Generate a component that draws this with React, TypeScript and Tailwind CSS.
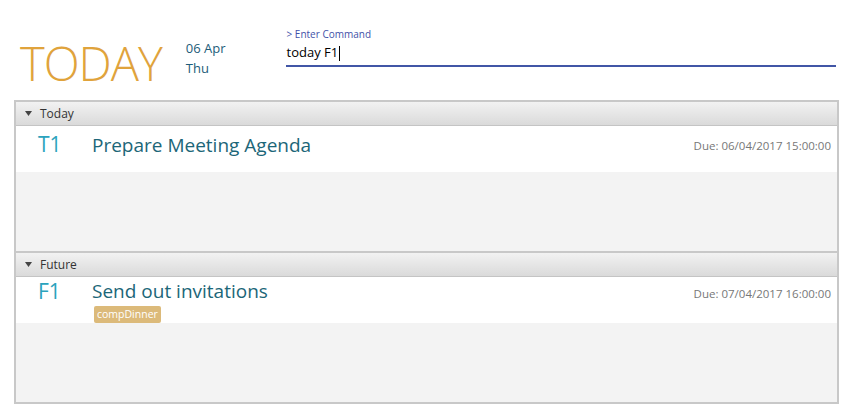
import React from 'react';

type Task = {
  id: string;
  title: string;
  due: string;
  tags?: string[];
};

type Section = {
  name: string;
  tasks: Task[];
};

const sections: Section[] = [
  {
    name: 'Today',
    tasks: [{ id: 'T1', title: 'Prepare Meeting Agenda', due: 'Due: 06/04/2017 15:00:00' }],
  },
  {
    name: 'Future',
    tasks: [
      { id: 'F1', title: 'Send out invitations', due: 'Due: 07/04/2017 16:00:00', tags: ['compDinner'] },
    ],
  },
];

const font = { fontFamily: '"Open Sans", "Noto Sans", sans-serif' };

const TaskRow = ({ task }: { task: Task }) => {
  const tagged = !!task.tags?.length;

  return (
    <div className="flex h-[46px] items-start bg-white">
      <div
        className={`w-[76px] pl-[22px] text-[21px] leading-[28px] text-[#2ba3bd] ${tagged ? 'pt-0' : 'pt-[4px]'}`}
      >
        {task.id}
      </div>
      <div className={`flex flex-1 flex-col ${tagged ? 'pt-[1px]' : 'pt-[6px]'}`}>
        <div className="text-[19px] leading-[26px] text-[#1c6678]">{task.title}</div>
        {tagged && (
          <div className="mt-[2px] flex gap-1 pl-[2px]">
            {task.tags!.map((tag) => (
              <span key={tag} className="rounded-[2px] bg-[#dcba7a] px-[3px] text-[10.5px] leading-[17px] text-white">
                {tag}
              </span>
            ))}
          </div>
        )}
      </div>
      <div
        className={`pr-[6px] text-[11.5px] leading-[15px] text-[#777] ${tagged ? 'pt-[9px]' : 'pt-[12px]'}`}
      >
        {task.due}
      </div>
    </div>
  );
};

const TaskSection = ({ section }: { section: Section }) => (
  <div className="flex h-[149px] flex-col">
    <div className="flex h-[24px] items-center border-b border-[#c4c4c4] bg-gradient-to-b from-[#f2f2f2] to-[#dadada] pl-[9px]">
      <svg width="7" height="5" viewBox="0 0 7 5" className="mr-[8px]">
        <path d="M0 0 H7 L3.5 5 Z" fill="#444" />
      </svg>
      <span className="text-[12px] text-[#333]">{section.name}</span>
    </div>
    {section.tasks.map((task) => (
      <TaskRow key={task.id} task={task} />
    ))}
    <div className="flex-1 bg-[#f3f3f3]" />
  </div>
);

export default function App() {
  return (
    <div className="h-[415px] w-[855px] bg-white" style={font}>
      <div className="flex h-[100px] items-start">
        <div className="pl-[20px] pt-[35px] text-[47px] font-light leading-[56px] tracking-[-1px] text-[#e0a33c]">
          TODAY
        </div>
        <div className="ml-[24px] flex flex-col pt-[38px] text-[13px] leading-[20px] text-[#1d5c79]">
          <span>06 Apr</span>
          <span>Thu</span>
        </div>
        <div className="ml-[60px] flex w-[550px] flex-col pt-[27px]">
          <span className="pl-[1px] text-[10px] leading-[14px] text-[#3f51a8]">&gt; Enter Command</span>
          <div className="flex h-[26px] items-center border-b-2 border-[#4156a6] pl-[1px] text-[13px] text-black">
            <span>today F1</span>
            <span className="ml-[1px] h-[15px] w-px bg-black" />
          </div>
        </div>
      </div>
      <div className="ml-[14px] w-[825px] border-2 border-[#c8c8c8]">
        <TaskSection section={sections[0]} />
        <div className="h-[2px] bg-[#c8c8c8]" />
        <TaskSection section={sections[1]} />
      </div>
    </div>
  );
}
